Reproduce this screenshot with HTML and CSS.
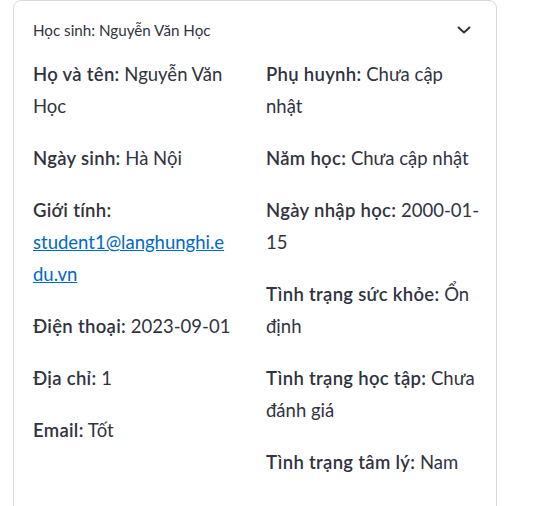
FILE: index.html
```html
<!DOCTYPE html>
<html lang="vi">
<head>
<meta charset="utf-8">
<title>Học sinh</title>
<link rel="stylesheet" href="styles.css">
</head>
<body>
<div class="page">
  <section class="expander">
    <div class="expander-header">
      <span class="expander-label">Học sinh: Nguyễn Văn Học</span>
      <svg class="chevron" width="16" height="16" viewBox="0 0 16 16" aria-hidden="true">
        <polyline points="2.5,5.5 8,10.5 13.5,5.5" fill="none" stroke="#31333f" stroke-width="2" stroke-linecap="round" stroke-linejoin="round"/>
      </svg>
    </div>
    <div class="expander-body">
      <div class="col">
        <p><strong>Họ và tên:</strong> Nguyễn Văn Học</p>
        <p><strong>Ngày sinh:</strong> Hà Nội</p>
        <p><strong>Giới tính:</strong> <a href="#">student1@langhunghi.e<wbr>du.vn</a></p>
        <p><strong>Điện thoại:</strong> 2023-09-01</p>
        <p><strong>Địa chỉ:</strong> 1</p>
        <p><strong>Email:</strong> Tốt</p>
      </div>
      <div class="col">
        <p><strong>Phụ huynh:</strong> Chưa cập nhật</p>
        <p><strong>Năm học:</strong> Chưa cập nhật</p>
        <p><strong>Ngày nhập học:</strong> 2000-01-15</p>
        <p><strong>Tình trạng sức khỏe:</strong> Ổn định</p>
        <p><strong>Tình trạng học tập:</strong> Chưa đánh giá</p>
        <p><strong>Tình trạng tâm lý:</strong> Nam</p>
      </div>
    </div>
  </section>
</div>
</body>
</html>
```
FILE: styles.css
```css
* { box-sizing: border-box; }
html, body { margin: 0; padding: 0; background: #ffffff; }
body {
  font-family: Lato, "Liberation Sans", sans-serif;
  color: #31333f;
}
.page {
  padding: 0 0 0 13px;
  width: 497px;
}
.expander {
  border: 1px solid #d9d9dc;
  border-radius: 8px;
  min-height: 520px;
}
.expander-header {
  display: flex;
  align-items: center;
  justify-content: space-between;
  padding: 15px 24px 0 19px;
  height: 42px;
}
.expander-label {
  font-size: 15.2px;
  line-height: 24px;
}
.chevron { display: block; }
.expander-body {
  display: grid;
  grid-template-columns: 214px 214px;
  column-gap: 19px;
  padding: 15px 0 0 19px;
}
.col p {
  margin: 0 0 20px 0;
  font-size: 18.5px;
  line-height: 32px;
}
.col strong {
  font-weight: 600;
  letter-spacing: 0.3px;
}
.col a {
  color: #0068c9;
  text-decoration: underline;
}
```
